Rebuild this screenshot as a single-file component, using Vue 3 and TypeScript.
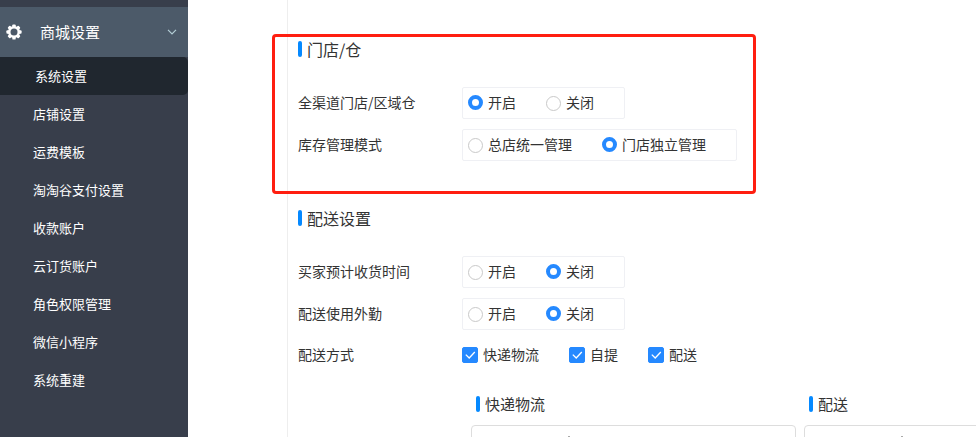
<script setup lang="ts">
import { reactive, ref } from 'vue'

interface RadioRow {
  id: string
  label: string
  options: string[]
  value: string
}

interface Section {
  title: string
  marked: boolean
  rows: RadioRow[]
}

const menu: string[] = [
  '系统设置',
  '店铺设置',
  '运费模板',
  '淘淘谷支付设置',
  '收款账户',
  '云订货账户',
  '角色权限管理',
  '微信小程序',
  '系统重建',
]
const active = ref('系统设置')

const sections = reactive<Section[]>([
  {
    title: '门店/仓',
    marked: true,
    rows: [
      { id: 'channel', label: '全渠道门店/区域仓', options: ['开启', '关闭'], value: '开启' },
      { id: 'stock', label: '库存管理模式', options: ['总店统一管理', '门店独立管理'], value: '门店独立管理' },
    ],
  },
  {
    title: '配送设置',
    marked: false,
    rows: [
      { id: 'eta', label: '买家预计收货时间', options: ['开启', '关闭'], value: '关闭' },
      { id: 'field', label: '配送使用外勤', options: ['开启', '关闭'], value: '关闭' },
    ],
  },
])

const methods = reactive([
  { name: '快递物流', checked: true },
  { name: '自提', checked: true },
  { name: '配送', checked: true },
])

const panels: string[] = ['快递物流', '配送']
</script>

<template>
  <div class="page">
    <nav class="sidebar">
      <button class="group" type="button" aria-expanded="true">
        <svg class="gear" viewBox="0 0 16 16" aria-hidden="true">
          <g fill="#fff">
            <rect v-for="a in [0, 45, 90, 135]" :key="a" x="6.3" y="0.4" width="3.4" height="15.2" rx="0.9" :transform="`rotate(${a} 8 8)`" />
            <circle cx="8" cy="8" r="6" />
          </g>
          <circle cx="8" cy="8" r="3.5" fill="#4c5a69" />
        </svg>
        <span class="group-name">商城设置</span>
        <svg class="chevron" viewBox="0 0 10 6" aria-hidden="true">
          <path d="M1 0.8 L5 4.8 L9 0.8" fill="none" stroke="#b4ced6" stroke-width="1.2" />
        </svg>
      </button>
      <a
        v-for="item in menu"
        :key="item"
        href="#"
        class="item"
        :class="{ active: item === active }"
        @click.prevent="active = item"
      >{{ item }}</a>
    </nav>

    <main class="content">
      <section v-for="section in sections" :key="section.title" class="section">
        <div v-if="section.marked" class="marker"></div>
        <h2 class="title">{{ section.title }}</h2>
        <div v-for="row in section.rows" :key="row.id" class="row">
          <span :id="row.id" class="label">{{ row.label }}</span>
          <div class="radios" role="radiogroup" :aria-labelledby="row.id">
            <label v-for="option in row.options" :key="option" class="option">
              <input v-model="row.value" class="radio" type="radio" :name="row.id" :value="option" />
              <span class="text">{{ option }}</span>
            </label>
          </div>
        </div>
        <template v-if="!section.marked">
          <div class="row">
            <span id="methods" class="label">配送方式</span>
            <div class="checks" role="group" aria-labelledby="methods">
              <label v-for="method in methods" :key="method.name" class="option">
                <span class="box">
                  <input v-model="method.checked" class="check" type="checkbox" />
                  <svg v-if="method.checked" class="tick" viewBox="0 0 16 16" aria-hidden="true">
                    <path d="M3.8 7.6 L7.2 11 L12.8 5" fill="none" stroke="#fff" stroke-width="1.3" />
                  </svg>
                </span>
                <span class="text">{{ method.name }}</span>
              </label>
            </div>
          </div>
          <div class="panels">
            <div v-for="panel in panels" :key="panel" class="panel">
              <h3 class="title subtitle">{{ panel }}</h3>
              <div class="card"><div class="dot"></div></div>
            </div>
          </div>
        </template>
      </section>
    </main>
  </div>
</template>

<style>
body {
  margin: 0;
  background: #fff;
}
</style>

<style scoped>
.page {
  display: flex;
  height: 100vh;
  overflow: hidden;
  font-family: "Microsoft YaHei", "Noto Sans CJK SC", sans-serif;
  font-size: 14px;
  line-height: 20px;
  color: #333;
}

.sidebar {
  flex: none;
  width: 188px;
  box-sizing: border-box;
  padding-top: 7px;
  background: #383e4b;
}

.group {
  display: flex;
  align-items: center;
  width: 100%;
  height: 50px;
  padding: 0 11px 0 6px;
  border: 0;
  background: #4c5a69;
  color: #fff;
  font-family: inherit;
  font-size: 15px;
  text-align: left;
  cursor: pointer;
}

.gear {
  width: 16px;
  height: 16px;
  margin-right: 18px;
}

.group-name {
  flex: 1;
}

.group-name,
.label,
.text {
  padding-bottom: 2px;
}

.chevron {
  width: 10px;
  height: 6px;
}

.item {
  display: block;
  padding-left: 33px;
  font-size: 13px;
  line-height: 38px;
  color: #fff;
  text-decoration: none;
}

.item.active {
  padding-left: 35px;
  border-radius: 0 5px 5px 0;
  background: #20272f;
}

.content {
  flex: 1;
  margin-left: 99px;
  padding: 39px 0 0 10px;
  border-left: 1px solid #eee;
}

.section {
  position: relative;
  margin-bottom: 47px;
}

.marker {
  position: absolute;
  top: -5px;
  left: -26px;
  width: 478px;
  height: 154px;
  border: 3px solid #ff1e10;
  border-radius: 4px;
}

.title {
  display: flex;
  align-items: center;
  gap: 5px;
  margin: 0 0 28px;
  font-size: 16px;
  font-weight: 400;
  line-height: 20px;
}

.title::before {
  content: "";
  width: 4px;
  height: 16px;
  border-radius: 2px;
  background: #0589ff;
}

.row {
  display: flex;
  align-items: center;
  margin-bottom: 10px;
}

.label {
  width: 164px;
}

.radios {
  display: flex;
  height: 30px;
  padding-left: 5px;
  border: 1px solid #eff0f4;
  border-radius: 2px;
}

.checks {
  display: flex;
  height: 30px;
}

.option {
  display: flex;
  align-items: center;
  gap: 5px;
  padding-right: 30px;
}

.radio {
  appearance: none;
  box-sizing: border-box;
  width: 15px;
  height: 15px;
  margin: 1px 0 0;
  border: 1px solid #c9c9c9;
  border-radius: 50%;
}

.radio:checked {
  margin: 0 0 1px;
  border: 4px solid #2589ff;
}

.box {
  display: grid;
}

.check,
.tick {
  grid-area: 1 / 1;
  width: 16px;
  height: 16px;
}

.check {
  appearance: none;
  box-sizing: border-box;
  margin: 0;
  border: 1px solid #c9c9c9;
  border-radius: 2px;
}

.check:checked {
  border-color: #2589ff;
  background: #2589ff;
}

.tick {
  pointer-events: none;
}

.panels {
  display: grid;
  grid-template-columns: 325px 325px;
  gap: 8px;
  padding: 14px 0 0 173px;
}

.subtitle {
  margin: 0 0 11px 5px;
  font-size: 15px;
}

.card {
  height: 110px;
  padding: 10px 0 0 96px;
  border: 1px solid #ddd;
  border-radius: 4px;
}

.dot {
  width: 2px;
  height: 2px;
  background: #aaa;
}
</style>
